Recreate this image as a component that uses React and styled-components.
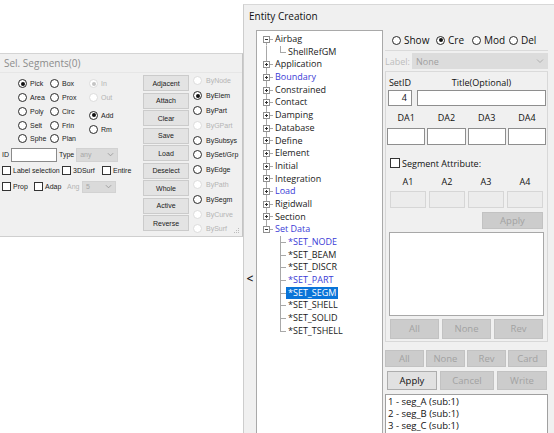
import React from 'react';
import styled, { createGlobalStyle } from 'styled-components';

const GlobalStyle = createGlobalStyle`
  html, body { margin: 0; padding: 0; background: #fff; }
  body { font-family: "Open Sans", "Noto Sans", sans-serif; color: #111; }
`;

const line = '#a8a8a8';

const Screen = styled.div`
  display: flex;
  width: 554px;
  height: 433px;
  overflow: hidden;
  background: #fff;
`;

// ---------- left floating panel ----------
const LeftArea = styled.div`
  width: 243px;
  flex-shrink: 0;
  padding-top: 53px;
`;

const SelPanel = styled.div`
  position: relative;
  height: 184px;
  box-sizing: border-box;
  background: #f0f0f0;
  border-top: 1px solid #d4d4d4;
  border-right: 1px solid #c4c4c4;
  border-bottom: 1px solid #cfcfcf;
  display: flex;
  flex-direction: column;
  font-family: "Liberation Sans", Arial, sans-serif;
  font-size: 7px;
  color: #222;
`;

const SelTitle = styled.div`
  height: 18px;
  line-height: 18px;
  padding-left: 4px;
  font-family: "Open Sans", sans-serif;
  font-size: 10px;
  color: #8c8c8c;
  border-bottom: 1px solid #e6e6e6;
`;

const SelBody = styled.div`
  display: flex;
  flex: 1;
`;

const OptionsArea = styled.div`
  width: 143px;
  flex-shrink: 0;
  padding-top: 4px;
  display: flex;
  flex-direction: column;
`;

const RadioCols = styled.div`
  display: flex;
  padding-left: 18px;
`;

const RadioCol = styled.div`
  display: flex;
  flex-direction: column;
  width: ${p => (p.$w ? `${p.$w}px` : 'auto')};
`;

const Opt = styled.div`
  display: flex;
  align-items: center;
  flex-shrink: 0;
  gap: ${p => p.$gap ?? 3}px;
  width: ${p => (p.$w ? `${p.$w}px` : 'auto')};
  height: ${p => p.$h ?? 13.75}px;
  margin-top: ${p => p.$mt ?? 0}px;
  color: ${p => (p.$disabled ? '#b4b4b4' : 'inherit')};
  white-space: nowrap;
`;

const Circle = styled.span`
  width: 9px;
  height: 9px;
  box-sizing: border-box;
  border-radius: 50%;
  border: 1px solid ${p => (p.$disabled ? '#dcdcdc' : '#2a2a2a')};
  background: #fff;
  display: inline-flex;
  align-items: center;
  justify-content: center;
  flex-shrink: 0;

  &::after {
    content: '';
    display: ${p => (p.$checked ? 'block' : 'none')};
    width: 4px;
    height: 4px;
    border-radius: 50%;
    background: ${p => (p.$disabled ? '#c4c4c4' : '#111')};
  }
`;

const Box = styled.span`
  width: 9px;
  height: 9px;
  box-sizing: border-box;
  border: 1px solid #333;
  background: #fff;
  flex-shrink: 0;
`;

const IdRow = styled.div`
  display: flex;
  align-items: center;
  height: 14px;
  margin-top: 2px;
  padding-left: 2px;
`;

const SmallInput = styled.div`
  width: ${p => p.$w}px;
  height: 14px;
  box-sizing: border-box;
  border: 1px solid #8a8a8a;
  background: #fff;
  margin: 0 2px 0 2px;
`;

const SmallCombo = styled.div`
  width: ${p => p.$w}px;
  height: ${p => p.$h}px;
  box-sizing: border-box;
  background: #dadada;
  border: 1px solid #d2d2d2;
  color: #a8a8a8;
  display: flex;
  align-items: center;
  justify-content: space-between;
  padding: 0 3px;
  margin-left: ${p => p.$ml ?? 0}px;
`;

const CheckRow = styled.div`
  display: flex;
  align-items: center;
  height: 12px;
  margin-top: ${p => p.$mt}px;
  padding-left: 2px;
`;

const ButtonStack = styled.div`
  width: 46px;
  flex-shrink: 0;
  padding-top: 2px;
  display: flex;
  flex-direction: column;
  gap: 1.5px;
`;

const PanelButton = styled.div`
  height: 16px;
  box-sizing: border-box;
  background: #e3e3e3;
  border: 1px solid #cbcbcb;
  display: flex;
  align-items: center;
  justify-content: center;
  color: #1a1a1a;
`;

const ByStack = styled.div`
  display: flex;
  flex-direction: column;
  padding: 0.6px 0 0 4px;
`;

const Grip = styled.svg`
  position: absolute;
  right: 2px;
  bottom: 2px;
`;

// ---------- Entity creation window ----------
const Window = styled.div`
  flex: 1;
  min-width: 0;
  margin-top: 4px;
  background: #f0f0f0;
  border-left: 1px solid #cdcdcd;
  border-top: 1px solid #d8d8d8;
  display: flex;
  flex-direction: column;
`;

const WindowTitle = styled.div`
  height: 25px;
  line-height: 22px;
  padding-left: 5px;
  font-size: 10px;
  color: #111;
`;

const WindowBody = styled.div`
  flex: 1;
  display: flex;
  min-height: 0;
`;

const CollapseStrip = styled.div`
  width: 12px;
  flex-shrink: 0;
  display: flex;
  justify-content: center;
  padding-top: 243px;
  font-size: 12px;
  font-weight: 600;
  line-height: 12px;
  color: #222;
`;

const TreeBox = styled.div`
  width: 127px;
  flex-shrink: 0;
  box-sizing: border-box;
  background: #fff;
  border: 1px solid #a9a9a9;
  border-bottom: none;
  padding-top: 2px;
  font-size: 9px;
`;

const TreeRow = styled.div`
  display: flex;
  height: 12.7px;
  white-space: nowrap;
`;

const vertBg = {
  full: `linear-gradient(${line},${line}) 9px 0 / 1px 100% no-repeat`,
  down: `linear-gradient(${line},${line}) 9px 100% / 1px 50% no-repeat`,
  up: `linear-gradient(${line},${line}) 9px 0 / 1px 50% no-repeat`,
};

const RootCell = styled.div`
  width: 16px;
  flex-shrink: 0;
  display: flex;
  align-items: center;
  background: ${p => [
    p.$vert && vertBg[p.$vert],
    p.$tick && `linear-gradient(${line},${line}) 9px 50% / 7px 1px no-repeat`,
  ].filter(Boolean).join(', ') || 'none'};
`;

const ChildCell = styled.div`
  width: 13px;
  flex-shrink: 0;
  background: ${p => [
    p.$last
      ? `linear-gradient(${line},${line}) 7px 0 / 1px 50% no-repeat`
      : `linear-gradient(${line},${line}) 7px 0 / 1px 100% no-repeat`,
    `linear-gradient(${line},${line}) 7px 50% / 6px 1px no-repeat`,
  ].join(', ')};
`;

const Expander = styled.span`
  width: 7px;
  height: 7px;
  box-sizing: border-box;
  margin-left: 6px;
  border: 1px solid #909090;
  background:
    linear-gradient(#333, #333) center / 3px 1px no-repeat,
    ${p => (p.$open ? '' : 'linear-gradient(#333, #333) center / 1px 3px no-repeat,')}
    #fff;
`;

const TreeLabel = styled.span`
  padding: 0 2px;
  line-height: 12.7px;
  color: ${p => (p.$selected ? '#fff' : p.$blue ? '#3b3bd6' : '#1a1a1a')};
  background: ${p => (p.$selected ? '#0a74d8' : 'transparent')};
`;

const RightPanel = styled.div`
  flex: 1;
  min-width: 0;
  display: flex;
  flex-direction: column;
  padding: 0 6px 0 2px;
  font-size: 9px;
`;

const ModeRow = styled.div`
  height: 21px;
  display: flex;
  align-items: center;
  padding-left: 7px;
  font-size: 10px;
`;

const ModeOpt = styled.div`
  width: ${p => (p.$w ? `${p.$w}px` : 'auto')};
  display: flex;
  align-items: center;
  gap: 3px;
`;

const LabelRow = styled.div`
  height: 20px;
  border-top: 1px solid #dadada;
  border-bottom: 1px solid #dadada;
  display: flex;
  align-items: center;
  color: #bdbdbd;
`;

const LabelText = styled.span`
  width: 27px;
  flex-shrink: 0;
`;

const Combo = styled.div`
  flex: 1;
  height: 16px;
  box-sizing: border-box;
  background: #dcdcdc;
  color: #a0a0a0;
  display: flex;
  align-items: center;
  justify-content: space-between;
  padding: 0 4px;
`;

const GroupBox = styled.div`
  border: 1px solid #d8d8d8;
  border-top: none;
  padding-bottom: 2px;
  display: flex;
  flex-direction: column;
`;

const Labels = styled.div`
  display: flex;
  height: 13px;
  line-height: 13px;
  margin-top: ${p => p.$mt}px;
  padding: ${p => p.$pad ?? '0 1px'};
  gap: ${p => p.$gap ?? 2}px;
`;

const Cap = styled.span`
  flex: ${p => (p.$w ? `0 0 ${p.$w}px` : 1)};
  text-align: center;
`;

const FieldRow = styled.div`
  display: flex;
  height: ${p => p.$h}px;
  margin-top: ${p => p.$mt}px;
  padding: ${p => p.$pad};
  gap: ${p => p.$gap}px;
`;

const Field = styled.div`
  flex: ${p => (p.$w ? `0 0 ${p.$w}px` : 1)};
  box-sizing: border-box;
  border: 1px solid ${p => (p.$disabled ? '#d6d6d6' : '#8e8e8e')};
  background: ${p => (p.$disabled ? '#ececec' : '#fff')};
  display: flex;
  align-items: center;
  justify-content: flex-end;
  padding-right: 4px;
`;

const AttrCheck = styled.div`
  display: flex;
  align-items: center;
  gap: 2px;
  height: 13px;
  margin-top: 12px;
  padding-left: 4px;
  font-size: 9px;
`;

const AttrBox = styled(Box)`
  width: 10px;
  height: 10px;
  border-color: #333;
`;

const Btn = styled.div`
  flex: ${p => (p.$w ? `0 0 ${p.$w}px` : 1)};
  box-sizing: border-box;
  display: flex;
  align-items: center;
  justify-content: center;
  font-size: 9.5px;
  background: ${p => (p.$enabled ? '#e1e1e1' : '#cccccc')};
  border: 1px solid ${p => (p.$enabled ? '#adadad' : '#c2c2c2')};
  color: ${p => (p.$enabled ? '#111' : '#a2a2a2')};
`;

const ApplyTop = styled.div`
  display: flex;
  justify-content: flex-end;
  height: 17px;
  margin-top: 4px;
  padding-right: 4px;
`;

const ListBox = styled.div`
  height: 84px;
  margin: 3px 3px 0;
  box-sizing: border-box;
  background: #fff;
  border: 1px solid #a8a8a8;
`;

const ResultList = styled.div`
  flex: 1;
  margin-top: 4px;
  background: #fff;
  border: 1px solid #a0a0a0;
  border-bottom: none;
  padding: 1px 2px;
  font-size: 9.5px;
  line-height: 12px;
  color: #111;
`;

const Chevron = ({ size = 7, color = '#999' }) => (
  <svg width={size} height={size} viewBox="0 0 8 8">
    <path d="M1 2.5 L4 5.5 L7 2.5" fill="none" stroke={color} strokeWidth="1" />
  </svg>
);

const Radio = ({ label, checked, disabled, h, mt, gap }) => (
  <Opt $disabled={disabled} $h={h} $mt={mt} $gap={gap}>
    <Circle $checked={checked} $disabled={disabled} />
    {label}
  </Opt>
);

const Check = ({ label, w }) => (
  <Opt $gap={2} $h={12} $w={w}>
    <Box />
    {label}
  </Opt>
);

const treeItems = [
  { label: 'Airbag', exp: 'open', vert: 'down' },
  { label: 'ShellRefGM', child: true, rootVert: 'full', last: true },
  { label: 'Application', exp: 'closed' },
  { label: 'Boundary', exp: 'closed', blue: true },
  { label: 'Constrained', exp: 'closed' },
  { label: 'Contact', exp: 'closed' },
  { label: 'Damping', exp: 'closed' },
  { label: 'Database', exp: 'closed' },
  { label: 'Define', exp: 'closed' },
  { label: 'Element', exp: 'closed' },
  { label: 'Initial', exp: 'closed' },
  { label: 'Integration', exp: 'closed' },
  { label: 'Load', exp: 'closed', blue: true },
  { label: 'Rigidwall', exp: 'closed' },
  { label: 'Section', exp: 'closed' },
  { label: 'Set Data', exp: 'open', blue: true, vert: 'up' },
  { label: '*SET_NODE', child: true, blue: true },
  { label: '*SET_BEAM', child: true },
  { label: '*SET_DISCR', child: true },
  { label: '*SET_PART', child: true, blue: true },
  { label: '*SET_SEGM', child: true, selected: true },
  { label: '*SET_SHELL', child: true },
  { label: '*SET_SOLID', child: true },
  { label: '*SET_TSHELL', child: true, last: true },
];

const panelButtons = ['Adjacent', 'Attach', 'Clear', 'Save', 'Load', 'Deselect', 'Whole', 'Active', 'Reverse'];

const byOptions = [
  { label: 'ByNode', disabled: true },
  { label: 'ByElem', checked: true },
  { label: 'ByPart' },
  { label: 'ByGPart', disabled: true },
  { label: 'BySubsys' },
  { label: 'BySet/Grp' },
  { label: 'ByEdge' },
  { label: 'ByPath', disabled: true },
  { label: 'BySegm' },
  { label: 'ByCurve', disabled: true },
  { label: 'BySurf', disabled: true },
];

function TreeItem({ item }) {
  if (item.child) {
    return (
      <TreeRow>
        <RootCell $vert={item.rootVert} />
        <ChildCell $last={item.last} />
        <TreeLabel $blue={item.blue} $selected={item.selected}>{item.label}</TreeLabel>
      </TreeRow>
    );
  }
  return (
    <TreeRow>
      <RootCell $vert={item.vert || 'full'} $tick>
        <Expander $open={item.exp === 'open'} />
      </RootCell>
      <TreeLabel $blue={item.blue}>{item.label}</TreeLabel>
    </TreeRow>
  );
}

export default function App() {
  return (
    <Screen>
      <GlobalStyle />
      <LeftArea>
        <SelPanel>
          <SelTitle>Sel. Segments(0)</SelTitle>
          <SelBody>
            <OptionsArea>
              <RadioCols>
                <RadioCol $w={32}>
                  <Radio label="Pick" checked />
                  <Radio label="Area" />
                  <Radio label="Poly" />
                  <Radio label="Selt" />
                  <Radio label="Sphe" />
                </RadioCol>
                <RadioCol $w={39}>
                  <Radio label="Box" />
                  <Radio label="Prox" />
                  <Radio label="Circ" />
                  <Radio label="Frin" />
                  <Radio label="Plan" />
                </RadioCol>
                <RadioCol>
                  <Radio label="In" checked disabled />
                  <Radio label="Out" disabled />
                  <Radio label="Add" checked mt={4} />
                  <Radio label="Rm" />
                </RadioCol>
              </RadioCols>
              <IdRow>
                ID
                <SmallInput $w={46} />
                Type
                <SmallCombo $w={42} $h={14} $ml={2}>
                  any
                  <Chevron />
                </SmallCombo>
              </IdRow>
              <CheckRow $mt={3}>
                <Check label="Label selection" w={60} />
                <Check label="3DSurf" w={40} />
                <Check label="Entire" />
              </CheckRow>
              <CheckRow $mt={4}>
                <Check label="Prop" w={32} />
                <Check label="Adap" w={33} />
                <Opt $disabled $h={12} $w={15}>Ang</Opt>
                <SmallCombo $w={34} $h={12}>
                  5
                  <Chevron />
                </SmallCombo>
              </CheckRow>
            </OptionsArea>
            <ButtonStack>
              {panelButtons.map(b => (
                <PanelButton key={b}>{b}</PanelButton>
              ))}
            </ButtonStack>
            <ByStack>
              {byOptions.map(o => (
                <Radio key={o.label} label={o.label} checked={o.checked} disabled={o.disabled} h={14.8} gap={4} />
              ))}
            </ByStack>
          </SelBody>
          <Grip width="6" height="6" viewBox="0 0 6 6">
            <rect x="4" y="0" width="1" height="1" fill="#bbb" />
            <rect x="2" y="2" width="1" height="1" fill="#bbb" />
            <rect x="4" y="2" width="1" height="1" fill="#bbb" />
            <rect x="0" y="4" width="1" height="1" fill="#bbb" />
            <rect x="2" y="4" width="1" height="1" fill="#bbb" />
            <rect x="4" y="4" width="1" height="1" fill="#bbb" />
          </Grip>
        </SelPanel>
      </LeftArea>

      <Window>
        <WindowTitle>Entity Creation</WindowTitle>
        <WindowBody>
          <CollapseStrip>&lt;</CollapseStrip>
          <TreeBox>
            {treeItems.map(item => (
              <TreeItem key={item.label} item={item} />
            ))}
          </TreeBox>
          <RightPanel>
            <ModeRow>
              <ModeOpt $w={44}><Circle />Show</ModeOpt>
              <ModeOpt $w={36}><Circle $checked />Cre</ModeOpt>
              <ModeOpt $w={37}><Circle />Mod</ModeOpt>
              <ModeOpt><Circle />Del</ModeOpt>
            </ModeRow>
            <LabelRow>
              <LabelText>Label:</LabelText>
              <Combo>
                None
                <Chevron size={8} color="#b0b0b0" />
              </Combo>
            </LabelRow>
            <GroupBox>
              <Labels $mt={4} $gap={5} $pad="0 1px 0 2px">
                <Cap $w={24}>SetID</Cap>
                <Cap>Title(Optional)</Cap>
              </Labels>
              <FieldRow $h={16} $mt={1} $pad="0 1px 0 2px" $gap={5}>
                <Field $w={24}>4</Field>
                <Field />
              </FieldRow>
              <Labels $mt={5}>
                <Cap>DA1</Cap>
                <Cap>DA2</Cap>
                <Cap>DA3</Cap>
                <Cap>DA4</Cap>
              </Labels>
              <FieldRow $h={17} $mt={4} $pad="0 1px" $gap={2}>
                <Field />
                <Field />
                <Field />
                <Field />
              </FieldRow>
              <AttrCheck>
                <AttrBox />
                Segment Attribute:
              </AttrCheck>
              <Labels $mt={5} $pad="0 4px" $gap={3}>
                <Cap>A1</Cap>
                <Cap>A2</Cap>
                <Cap>A3</Cap>
                <Cap>A4</Cap>
              </Labels>
              <FieldRow $h={17} $mt={3} $pad="0 4px" $gap={3}>
                <Field $disabled />
                <Field $disabled />
                <Field $disabled />
                <Field $disabled />
              </FieldRow>
              <ApplyTop>
                <Btn $w={61}>Apply</Btn>
              </ApplyTop>
              <ListBox />
              <FieldRow $h={20} $mt={3} $pad="0 4px" $gap={3}>
                <Btn>All</Btn>
                <Btn>None</Btn>
                <Btn>Rev</Btn>
              </FieldRow>
            </GroupBox>
            <FieldRow $h={18} $mt={8} $pad="0 1px 0 0" $gap={2.5}>
              <Btn>All</Btn>
              <Btn>None</Btn>
              <Btn>Rev</Btn>
              <Btn>Card</Btn>
            </FieldRow>
            <FieldRow $h={19} $mt={4} $pad="0 1px 0 2px" $gap={3}>
              <Btn $enabled $w={50}>Apply</Btn>
              <Btn $w={54}>Cancel</Btn>
              <Btn>Write</Btn>
            </FieldRow>
            <ResultList>
              <div>1 - seg_A (sub:1)</div>
              <div>2 - seg_B (sub:1)</div>
              <div>3 - seg_C (sub:1)</div>
            </ResultList>
          </RightPanel>
        </WindowBody>
      </Window>
    </Screen>
  );
}
